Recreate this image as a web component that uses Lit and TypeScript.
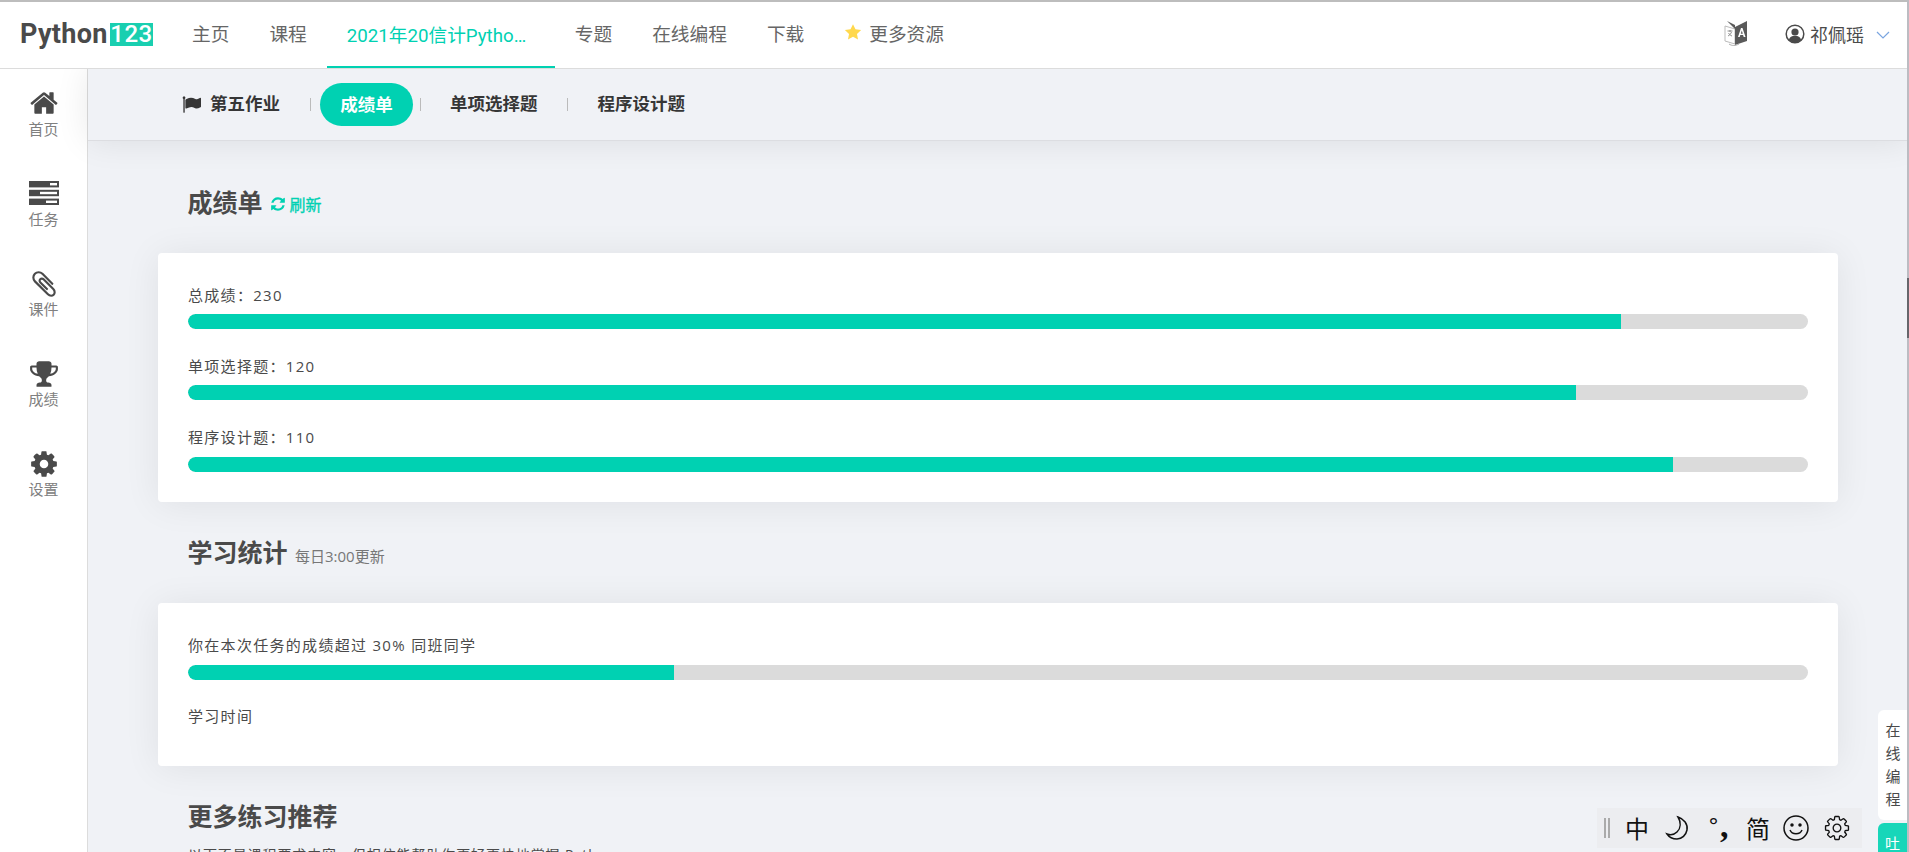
import { LitElement, html, css, svg } from "lit";
import { customElement } from "lit/decorators.js";

const FA = {
  home: "M1472 992v480q0 26-19 45t-45 19h-384v-384h-256v384h-384q-26 0-45-19t-19-45v-480q0-1 .5-3t.5-3l575-474 575 474q1 2 1 6zm223-69l-62 74q-8 9-21 11h-3q-13 0-21-7l-692-577-692 577q-12 8-24 7-13-2-21-11l-62-74q-8-10-7-23.5t11-21.5l719-599q32-26 76-26t76 26l244 204v-195q0-14 9-23t23-9h192q14 0 23 9t9 23v408l219 182q10 8 11 21.5t-7 23.5z",
  clip: "M1596 1385q0 117-79 196t-196 79q-135 0-235-100l-777-776q-113-115-113-271 0-159 110-270t269-111q158 0 273 113l605 606q10 10 10 22 0 16-30.5 46.5t-46.5 30.5q-13 0-23-10l-606-607q-79-77-181-77-106 0-179 75t-73 181q0 105 76 181l776 777q63 63 145 63 64 0 106-42t42-106q0-82-63-145l-581-581q-26-24-60-24-29 0-48 19t-19 48q0 32 25 59l410 410q10 10 10 22 0 16-31 47t-47 31q-12 0-22-10l-410-410q-63-61-63-149 0-82 57-139t139-57q88 0 149 63l581 581q100 98 100 235z",
  trophy: "M522 883q-74-162-74-371h-256v96q0 78 94.5 162t235.5 113zm1078-275v-96h-256q0 209-74 371 141-29 235.5-113t94.5-162zm128-128v128q0 71-41.5 143t-112 130-173 97.5-215.5 44.5q-42 54-95 95-38 34-52.5 72.5t-14.5 89.5q0 54 30.5 91t97.5 37q75 0 133.5 45.5t58.5 114.5v64q0 14-9 23t-23 9h-832q-14 0-23-9t-9-23v-64q0-69 58.5-114.5t133.5-45.5q67 0 97.5-37t30.5-91q0-51-14.5-89.5t-52.5-72.5q-53-41-95-95-113-5-215.5-44.5t-173-97.5-112-130-41.5-143v-128q0-40 28-68t68-28h288v-96q0-66 47-113t113-47h576q66 0 113 47t47 113v96h288q40 0 68 28t28 68z",
  cog: "M1152 896q0-106-75-181t-181-75-181 75-75 181 75 181 181 75 181-75 75-181zm512-109v222q0 12-8 23t-20 13l-185 28q-19 54-39 91 35 50 107 138 10 12 10 25t-9 23q-27 37-99 108t-94 71q-12 0-26-9l-138-108q-44 23-91 38-16 136-29 186-7 28-36 28h-222q-14 0-24.5-8.5t-11.5-21.5l-28-184q-49-16-90-37l-141 107q-10 9-25 9-14 0-25-11-126-114-165-168-7-10-7-23 0-12 8-23 15-21 51-66.5t54-70.5q-27-50-41-99l-183-27q-13-2-21-12.5t-8-23.5v-222q0-12 8-23t19-13l186-28q14-46 39-92-40-57-107-138-10-12-10-24 0-10 9-23 26-36 98.5-107.5t94.5-71.5q13 0 26 10l138 107q44-23 91-38 16-136 29-186 7-28 36-28h222q14 0 24.5 8.5t11.5 21.5l28 184q49 16 90 37l142-107q9-9 24-9 13 0 25 10 129 119 165 170 7 8 7 22 0 12-8 23-15 21-51 66.5t-54 70.5q26 50 41 98l183 28q13 2 21 12.5t8 23.5z",
  refresh: "M1639 1056q0 5-1 7-64 268-268 434.5t-478 166.5q-146 0-282.5-55t-243.5-157l-129 129q-19 19-45 19t-45-19-19-45v-448q0-26 19-45t45-19h448q26 0 45 19t19 45-19 45l-137 137q71 66 161 102t187 36q134 0 250-65t186-179q11-17 53-117 8-23 30-23h192q13 0 22.5 9.5t9.5 22.5zm25-800v448q0 26-19 45t-45 19h-448q-26 0-45-19t-19-45 19-45l138-138q-148-137-349-137-134 0-250 65t-186 179q-11 17-53 117-8 23-30 23h-199q-13 0-22.5-9.5t-9.5-22.5v-7q65-268 270-434.5t480-166.5q146 0 284 55.5t245 156.5l130-129q19-19 45-19t45 19 19 45z",
  flag: "M320 256q0 72-64 110v1266q0 13-9.5 22.5t-22.5 9.5h-64q-13 0-22.5-9.5t-9.5-22.5v-1266q-64-38-64-110 0-53 37.5-90.5t90.5-37.5 90.5 37.5 37.5 90.5zm1472 64v763q0 25-12.5 38.5t-39.5 27.5q-215 116-369 116-61 0-123.5-22t-108.5-48-115.5-48-142.5-22q-192 0-464 146-17 9-33 9-26 0-45-19t-19-45v-742q0-32 31-55 21-14 79-43 236-120 421-120 107 0 200 29t219 88q38 19 88 19 54 0 117.5-21t110-47 88-47 54.5-21q26 0 45 19t19 45z",
};

const fa = (d: string, cls: string) =>
  html`<svg class=${cls} viewBox="0 0 1792 1792" fill="currentColor"><path d=${d}></path></svg>`;

const taskIcon = html`<svg class="ic-task" viewBox="0 0 30 24" aria-hidden="true">
  <rect x="0" y="0" width="30" height="6.4" fill="#4a4a4a"></rect>
  <rect x="21" y="2" width="7" height="2.4" fill="#fff"></rect>
  <rect x="0" y="8.8" width="30" height="6.4" fill="#4a4a4a"></rect>
  <rect x="11" y="10.8" width="17" height="2.4" fill="#fff"></rect>
  <rect x="0" y="17.6" width="30" height="6.4" fill="#4a4a4a"></rect>
  <rect x="17" y="19.6" width="11" height="2.4" fill="#fff"></rect>
</svg>`;

const sideItems = [
  { label: "首页", icon: fa(FA.home, "ic-home") },
  { label: "任务", icon: taskIcon },
  { label: "课件", icon: fa(FA.clip, "ic-clip") },
  { label: "成绩", icon: fa(FA.trophy, "ic-trophy") },
  { label: "设置", icon: fa(FA.cog, "ic-cog") },
];

const scores = [
  { label: "总成绩：230", pct: 88.46 },
  { label: "单项选择题：120", pct: 85.68 },
  { label: "程序设计题：110", pct: 91.67 },
];

@customElement("app-root")
export class AppRoot extends LitElement {
  static styles = css`
    :host {
      display: block;
      position: relative;
      width: 1909px;
      height: 852px;
      overflow: hidden;
      font-family: "Open Sans", "Noto Sans CJK SC", sans-serif;
      color: #4a4a4a;
      background: #f0f2f6;
    }
    .page { display: flex; flex-direction: column; height: 852px; }
    .top {
      flex: none;
      height: 66px;
      border-top: 2px solid #bdbdbd;
      border-bottom: 1px solid #dcdcdc;
      background: #fff;
      display: flex;
      align-items: stretch;
      padding-left: 20px;
      position: relative;
      z-index: 3;
    }
    .logo { display: flex; align-items: center; width: 152px; flex: none; margin-bottom: 2px; }
    .logo .py {
      font: 700 27px/30px "Roboto", sans-serif;
      color: #4a4a4a;
      width: 90px;
      letter-spacing: 0.3px;
    }
    .logo .num {
      width: 43px;
      height: 23px;
      background: #19cfb0;
      color: #fff;
      font: 500 24px/23px "Roboto", sans-serif;
      text-align: center;
      letter-spacing: 0.5px;
    }
    .nav { display: flex; align-items: stretch; }
    .nav a {
      display: flex;
      align-items: center;
      padding: 0 20px 5px;
      font-size: 18.7px;
      color: #666;
      white-space: nowrap;
    }
    .nav a.on {
      width: 228px;
      box-sizing: border-box;
      color: #00d1b2;
      padding: 0 20px 2px;
      border-bottom: 2px solid #00d1b2;
      font-family: "Roboto", "Noto Sans CJK SC", sans-serif;
    }
    .nav a.on span { display: block; width: 186px; overflow: hidden; text-overflow: ellipsis; }
    .star { width: 18px; height: 18px; margin-right: 7px; margin-top: -1px; fill: #ffd84d; }
    .user { margin-left: auto; display: flex; align-items: center; padding: 0 19px 3px 0; font-size: 18px; color: #4a4a4a; }
    .i18n { width: 24px; height: 27px; margin-right: 37px; }
    .avatar { width: 20px; height: 20px; margin-right: 5px; }
    .chev { width: 14px; height: 8px; margin-left: 12px; margin-top: 3px; }

    .body { flex: 1; display: flex; min-height: 0; }
    .side {
      flex: none;
      width: 87px;
      border-right: 1px solid #dcdcdc;
      background: #fff;
      padding-top: 5px;
      box-sizing: content-box;
      position: relative;
      z-index: 1;
    }
    .side-item {
      height: 90px;
      display: flex;
      flex-direction: column;
      align-items: center;
      font-size: 15px;
      color: #808080;
    }
    .side-item .box { height: 41px; width: 100%; display: flex; align-items: flex-end; justify-content: center; color: #4a4a4a; }
    .side-item .lbl { line-height: 20px; margin-top: 4px; }
    .ic-home { width: 30px; height: 30px; margin-bottom: -3px; }
    .ic-task { width: 30px; height: 24px; }
    .ic-clip { width: 30px; height: 30px; margin-bottom: -4px; }
    .ic-trophy { width: 30px; height: 30px; margin-bottom: -4px; }
    .ic-cog { width: 30px; height: 30px; margin-bottom: -4px; }

    .main { flex: 1; min-width: 0; display: flex; flex-direction: column; }
    .sub {
      flex: none;
      height: 70px;
      padding-bottom: 1px;
      background: #f0f2f6;
      border-bottom: 1px solid #dcdde1;
      box-shadow: 0 0 34px rgba(0, 0, 20, 0.09);
      display: flex;
      align-items: center;
      padding-left: 94px;
      font-size: 17.5px;
      font-weight: 700;
      color: #363636;
      position: relative;
      z-index: 2;
    }
    .sub .flag { width: 19px; height: 19px; margin-right: 9px; color: #363636; }
    .sub .sep { width: 1px; height: 13px; background: #bbb; }
    .sub .pill {
      height: 43px;
      width: 93px;
      box-sizing: border-box;
      padding-bottom: 2px;
      border-radius: 22px;
      background: #00d1b2;
      color: #fff;
      display: flex;
      align-items: center;
      justify-content: center;
      margin: 0 7px 0 9px;
    }
    .m1 { margin-right: 30px; padding-bottom: 3px; }
    .m2 { margin: 0 29px 0 29px; padding-bottom: 3px; }
    .m3 { margin-left: 30px; padding-bottom: 3px; }

    .content { flex: 1; min-height: 0; overflow: hidden; padding: 45px 71px 0 70px; }
    .h {
      display: flex;
      align-items: center;
      height: 30px;
      padding: 0 0 4px 29.500px;
      font-size: 25px;
      font-weight: 700;
      color: #4a4a4a;
      white-space: nowrap;
    }
    .refresh { display: flex; align-items: center; font-size: 16px; font-weight: 400; color: #00d1b2; margin-left: 7px; margin-top: 6px; -webkit-text-stroke: 0.3px #00d1b2; }
    .refresh svg { width: 16px; height: 16px; margin-right: 4px; }
    .note { font-size: 15px; font-weight: 400; color: #777; margin-left: 7.500px; margin-top: 8px; }
    .card {
      background: #fff;
      border-radius: 4px;
      box-shadow: 0 2px 36px rgba(0, 0, 30, 0.075);
      padding: 32px 30px 30px;
      margin: 33px 0 34px;
    }
    .label { font-size: 15px; line-height: 20px; letter-spacing: 1.300px; color: #4a4a4a; white-space: pre; }
    .row { height: 71px; }
    .row:nth-child(2) { height: 72px; }
    .row:last-child { height: auto; }
    .row:last-child .label { margin-top: -1px; }
    .row:last-child .bar { margin-top: 10px; }
    .bar { height: 15px; margin-top: 9px; background: #dbdbdb; border-radius: 8px; overflow: hidden; }
    .bar i { display: block; height: 15px; background: #00d1b2; border-radius: 8px 0 0 8px; }
    .card.two { padding-bottom: 40px; }
    .card.two .bar { margin-top: 10px; }
    .card.two .label.time { margin-top: 26px; }
    .para { margin: 11px 0 0; padding-left: 30px; font-size: 14px; line-height: 20px; letter-spacing: 0.900px; color: #4a4a4a; white-space: nowrap; }

    .scroll { position: absolute; right: 0; top: 0; bottom: 0; width: 2px; background: #bcbcc2; z-index: 6; }
    .scroll i { position: absolute; left: 0; top: 278px; width: 2px; height: 60px; background: #66666b; }
    .float { position: absolute; right: 2px; top: 710px; width: 29px; z-index: 5; }
    .float .code {
      height: 110px;
      box-sizing: border-box;
      background: #fff;
      border-radius: 6px 0 0 6px;
      padding: 9px 0 0 1px;
      text-align: center;
      font-size: 15px;
      line-height: 23px;
      color: #4a4a4a;
    }
    .float .fb {
      margin-top: 3px;
      height: 40px;
      background: #17d6b9;
      border-radius: 6px 0 0 0;
      color: #fff;
      text-align: center;
      font-size: 15px;
      line-height: 23px;
      padding-top: 9px;
      box-sizing: border-box;
    }
    .ime {
      position: absolute;
      left: 1597px;
      top: 808px;
      width: 265px;
      height: 40px;
      background: #ecedf0;
      display: flex;
      align-items: center;
      color: #111;
      z-index: 5;
    }
    .ime .grip { width: 2px; height: 20px; margin-left: 7px; border-left: 2px solid #aaa; border-right: 2px solid #aaa; margin-right: 15px; flex: none; box-sizing: content-box; }
    .ime .zh { font-size: 24px; width: 24px; line-height: 40px; text-align: center; color: #111; font-family: "Noto Sans CJK SC", sans-serif; flex: none; }
    .ime svg { flex: none; fill: none; stroke: #111; stroke-width: 1.5; width: 26px; height: 26px; }
    .ime .deg { flex: none; width: 12px; font: 22px/40px "DejaVu Sans", sans-serif; margin-top: -2px; }
    .ime .comma { flex: none; width: 10px; font: 700 34px/40px "Liberation Serif", serif; margin-top: -4px; }
    .ml-moon { margin-left: 16px; }
    .ml-punc { margin-left: 17px; }
    .ml-jian { margin-left: 16px; }
    .ml-smile { margin-left: 13px; }
    .ml-gear { margin-left: 14px; }
    .ime svg.gear { width: 28px; height: 28px; }
  `;

  render() {
    return html`
      <div class="page">
        <header class="top">
          <div class="logo"><span class="py">Python</span><span class="num">123</span></div>
          <nav class="nav">
            <a>主页</a>
            <a>课程</a>
            <a class="on"><span>2021年20信计Python语言</span></a>
            <a>专题</a>
            <a>在线编程</a>
            <a>下载</a>
            <a><svg class="star" viewBox="0 0 24 24"><path d="M12 1.5l3.3 6.9 7.5 1-5.5 5.2 1.4 7.5-6.7-3.7-6.7 3.7 1.4-7.5L1.200 9.400l7.500-1z"></path></svg>更多资源</a>
          </nav>
          <div class="user">
            <svg class="i18n" viewBox="0 0 24 27">
              <path d="M1 6l10 3v15l-10-3z" fill="#fff" stroke="#bbb" stroke-width="1"></path>
              <path d="M3 1l8 4v4z" fill="#5a5a5a"></path>
              <path d="M11 7l12-6v20l-12 4z" fill="#5a5a5a"></path>
              <path d="M14 17l3-9h1.500l3 9h-1.800l-.6-2h-2.800l-.6 2zM16.800 13.700h2l-1-3.200z" fill="#fff"></path>
              <path d="M3.500 11h5M6 10v2M4 16c2-1 3-2.500 3.500-4M4.500 13c1 1.500 2 2.500 3.500 3" fill="none" stroke="#777" stroke-width=".8"></path>
              <path d="M5 24c3 2 6 2 10 0" fill="none" stroke="#aaa" stroke-width="1"></path>
            </svg>
            <svg class="avatar" viewBox="0 0 20 20">
              <circle cx="10" cy="10" r="8.800" fill="#fff" stroke="#4a4a4a" stroke-width="1.500"></circle>
              <circle cx="10" cy="8" r="3.600" fill="#4a4a4a"></circle>
              <path d="M3.800 16c.8-3 3-4.200 6.200-4.200s5.400 1.200 6.200 4.200a8.800 8.800 0 0 1-12.400 0z" fill="#4a4a4a"></path>
            </svg>
            祁佩瑶
            <svg class="chev" viewBox="0 0 14 8"><path d="M1 1l6 6 6-6" fill="none" stroke="#7aa5e0" stroke-width="1.200"></path></svg>
          </div>
        </header>
        <div class="body">
          <aside class="side">
            ${sideItems.map(
              (s) => html`<div class="side-item"><div class="box">${s.icon}</div><div class="lbl">${s.label}</div></div>`
            )}
          </aside>
          <div class="main">
            <div class="sub">
              ${fa(FA.flag, "flag")}
              <span class="m1">第五作业</span>
              <span class="sep"></span>
              <span class="pill">成绩单</span>
              <span class="sep"></span>
              <span class="m2">单项选择题</span>
              <span class="sep"></span>
              <span class="m3">程序设计题</span>
            </div>
            <div class="content">
              <div class="h">成绩单<span class="refresh">${fa(FA.refresh, "")}刷新</span></div>
              <section class="card">
                ${scores.map(
                  (s) => html`<div class="row">
                    <div class="label">${s.label}</div>
                    <div class="bar"><i style="width:${s.pct}%"></i></div>
                  </div>`
                )}
              </section>
              <div class="h">学习统计<span class="note">每日3:00更新</span></div>
              <section class="card two">
                <div class="label">你在本次任务的成绩超过 30% 同班同学</div>
                <div class="bar"><i style="width:30%"></i></div>
                <div class="label time">学习时间</div>
              </section>
              <div class="h">更多练习推荐</div>
              <p class="para">以下不是课程要求内容，但相信能帮助你更好更快地掌握 Python</p>
            </div>
          </div>
        </div>
      </div>
      <div class="scroll"><i></i></div>
      <div class="float">
        <div class="code">在<br />线<br />编<br />程</div>
        <div class="fb">吐<br />槽</div>
      </div>
      <div class="ime">
        <span class="grip"></span>
        <span class="zh">中</span>
        <svg class="ml-moon" viewBox="0 0 26 26"><path d="M13 2c6 2 10 7 9 13-1 5-5 9-10 9-4 0-8-2-10-5 3 1 7 1 10-2 4-4 4-10 1-15z"></path></svg>
        <span class="deg ml-punc">°</span>
        <span class="comma">,</span>
        <span class="zh ml-jian">简</span>
        <svg class="ml-smile" viewBox="0 0 26 26"><circle cx="13" cy="13" r="12"></circle><circle cx="9" cy="10" r="1" fill="#111"></circle><circle cx="17" cy="10" r="1" fill="#111"></circle><path d="M7 15c2 5 10 5 12 0"></path></svg>
        <svg class="gear ml-gear" viewBox="0 0 1792 1792" style="stroke-width:90">${svg`<path transform="translate(40 40) scale(.955)" d=${FA.cog}></path>`}</svg>
      </div>
    `;
  }
}
